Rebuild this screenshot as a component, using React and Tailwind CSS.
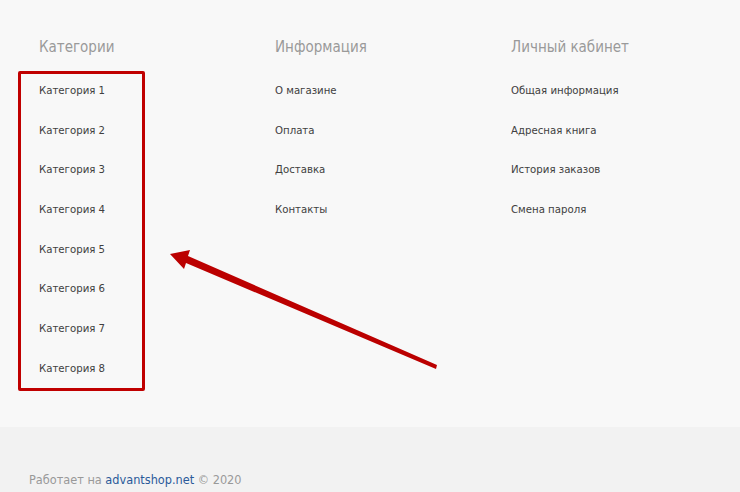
import React from 'react'

const columns = [
    {
        title: 'Категории',
        items: ['Категория 1', 'Категория 2', 'Категория 3', 'Категория 4', 'Категория 5', 'Категория 6', 'Категория 7', 'Категория 8'],
    },
    {
        title: 'Информация',
        items: ['О магазине', 'Оплата', 'Доставка', 'Контакты'],
    },
    {
        title: 'Личный кабинет',
        items: ['Общая информация', 'Адресная книга', 'История заказов', 'Смена пароля'],
    },
]

function Arrow() {
    return (
        <svg className="absolute left-0 top-0 pointer-events-none" width="740" height="492">
            <polygon points="437,365 436,369 186,263 184,269 170,254 190,250 188,256" fill="#bb0000" />
        </svg>
    )
}

export default function App() {
    return (
        <div className="relative w-[740px] h-[492px] bg-[#f8f8f8] overflow-hidden" style={{ fontFamily: '"DejaVu Sans Condensed", "DejaVu Sans", sans-serif' }}>
            <div className="flex pl-[39px] pt-[37px] h-[427px]">
                {columns.map((col) => (
                    <div key={col.title} className="w-[236px] shrink-0">
                        <h3 className="text-[15px] leading-[20px] text-[#9a9a9a]">{col.title}</h3>
                        <ul className="mt-[24px] flex flex-col gap-[20.7px]">
                            {col.items.map((item) => (
                                <li key={item} className="text-[11.3px] leading-[19px] text-[#404040]">{item}</li>
                            ))}
                        </ul>
                    </div>
                ))}
            </div>
            <div className="bg-[#f2f2f2] h-[65px] pl-[29px] pt-[44px]">
                <p className="text-[12.6px] leading-[18px] text-[#999]">
                    Работает на <span className="text-[#2a5a9a]">advantshop.net</span> © 2020
                </p>
            </div>

            <div className="absolute left-[18px] top-[71px] w-[127px] h-[320px] border-[3px] border-[#c00000] rounded-[2px]" />
            <Arrow />
        </div>
    )
}
